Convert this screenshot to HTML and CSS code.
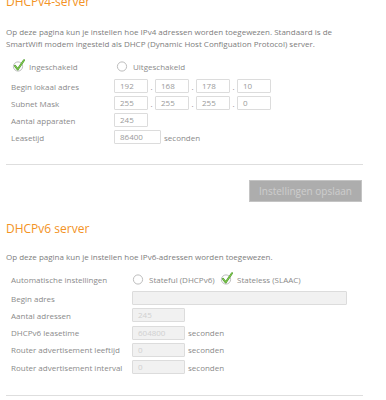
FILE: index.html
```html
<html>
<head>
<meta charset="utf-8">
<link rel="stylesheet" href="styles.css">
</head>
<body>

<div class="page">

  <h2 class="title first">DHCPv4-server</h2>
  <p class="intro">Op deze pagina kun je instellen hoe IPv4 adressen worden toegewezen. Standaard is de SmartWifi modem ingesteld als DHCP (Dynamic Host Configuation Protocol) server.</p>

  <div class="choice v4">
    <span class="opt w104">
      <svg class="mark" width="14" height="14" viewBox="0 0 14 14">
        <circle cx="6" cy="7.5" r="4.6" fill="#fff" stroke="#bdbdbd" stroke-width="1"/>
        <polyline points="3,6.8 5.7,10.4 12,1.2" fill="none" stroke="#4a9a2c" stroke-width="2" stroke-linecap="round" stroke-linejoin="round"/>
        <polyline points="3,6.8 5.7,10.4 12,1.2" fill="none" stroke="#9ad95a" stroke-width="0.8" stroke-linecap="round" stroke-linejoin="round"/>
      </svg>Ingeschakeld
    </span>
    <span class="opt">
      <svg class="mark" width="14" height="14" viewBox="0 0 14 14">
        <circle cx="6" cy="7.5" r="4.6" fill="#fff" stroke="#bdbdbd" stroke-width="1"/>
      </svg>Uitgeschakeld
    </span>
  </div>

  <div class="fields v4">
    <div class="row">
      <span class="label">Begin lokaal adres</span>
      <span class="field ip">192</span><span class="dot">.</span>
      <span class="field ip">168</span><span class="dot">.</span>
      <span class="field ip">178</span><span class="dot">.</span>
      <span class="field ip">10</span>
    </div>
    <div class="row">
      <span class="label">Subnet Mask</span>
      <span class="field ip">255</span><span class="dot">.</span>
      <span class="field ip">255</span><span class="dot">.</span>
      <span class="field ip">255</span><span class="dot">.</span>
      <span class="field ip">0</span>
    </div>
    <div class="row">
      <span class="label">Aantal apparaten</span>
      <span class="field ip">245</span>
    </div>
    <div class="row">
      <span class="label">Leasetijd</span>
      <span class="field lease">86400</span><span class="unit">seconden</span>
    </div>
  </div>

  <hr class="line">

  <div class="actions">
    <button class="save">Instellingen opslaan</button>
  </div>

  <h2 class="title">DHCPv6 server</h2>
  <p class="intro">Op deze pagina kun je instellen hoe IPv6-adressen worden toegewezen.</p>

  <div class="fields v6">
    <div class="row auto">
      <span class="label">Automatische instellingen</span>
      <span class="opt w88">
        <svg class="mark" width="14" height="14" viewBox="0 0 14 14">
          <circle cx="6" cy="7.5" r="4.6" fill="#fff" stroke="#bdbdbd" stroke-width="1"/>
        </svg>Stateful (DHCPv6)
      </span>
      <span class="opt">
        <svg class="mark" width="14" height="14" viewBox="0 0 14 14">
          <circle cx="6" cy="7.5" r="4.6" fill="#fff" stroke="#bdbdbd" stroke-width="1"/>
          <polyline points="3,6.8 5.7,10.4 12,1.2" fill="none" stroke="#4a9a2c" stroke-width="2" stroke-linecap="round" stroke-linejoin="round"/>
          <polyline points="3,6.8 5.7,10.4 12,1.2" fill="none" stroke="#9ad95a" stroke-width="0.8" stroke-linecap="round" stroke-linejoin="round"/>
        </svg>Stateless (SLAAC)
      </span>
    </div>
    <div class="row">
      <span class="label">Begin adres</span>
      <span class="field off wide"></span>
    </div>
    <div class="row">
      <span class="label">Aantal adressen</span>
      <span class="field off">245</span>
    </div>
    <div class="row">
      <span class="label">DHCPv6 leasetime</span>
      <span class="field off">604800</span><span class="unit">seconden</span>
    </div>
    <div class="row">
      <span class="label">Router advertisement leeftijd</span>
      <span class="field off">0</span><span class="unit">seconden</span>
    </div>
    <div class="row">
      <span class="label">Router advertisement interval</span>
      <span class="field off">0</span><span class="unit">seconden</span>
    </div>
  </div>

  <hr class="line last">

</div>

</body>
</html>
```

FILE: styles.css
```css
html {
  overflow: hidden;
}

body {
  margin: 0;
  background: #fff;
  font-family: "Open Sans", "Noto Sans", sans-serif;
  font-size: 8px;
  color: #8a8a8a;
}

.page {
  width: 357px;
  padding: 0 6px;
}

.title {
  margin: 19px 0 0 0;
  font-size: 12px;
  line-height: 16px;
  font-weight: 400;
  color: #f39325;
}

.title.first {
  margin-top: -6px;
}

.intro {
  margin: 14px 0 0 0;
  line-height: 12px;
  color: #7d7d7d;
}

.title.first + .intro {
  margin-top: 16px;
}

.choice {
  display: flex;
  align-items: center;
  height: 14px;
  margin-top: 9px;
  padding-left: 6px;
}

.opt {
  display: flex;
  align-items: center;
  height: 14px;
}

.w104 {
  width: 104px;
}

.w88 {
  width: 88px;
}

.mark {
  overflow: visible;
  margin-right: 3px;
  flex: none;
}

.fields.v4 {
  margin-top: 6px;
}

.fields.v6 {
  margin-top: 9px;
}

.row {
  display: flex;
  align-items: center;
  height: 14px;
  margin-bottom: 3px;
  padding-left: 5px;
}

.fields.v6 .row {
  margin-bottom: 3.3px;
}

.fields.v6 .row.auto {
  margin-bottom: 5px;
}

.label {
  width: 103px;
  flex: none;
}

.v6 .label {
  width: 121px;
}

.field {
  box-sizing: border-box;
  height: 14px;
  line-height: 12px;
  border: 1px solid #dcdcdc;
  border-radius: 1px;
  padding-left: 5px;
  color: #9a9a9a;
  background: #fff;
}

.ip {
  width: 34px;
}

.lease {
  width: 47px;
}

.dot {
  width: 7px;
  text-align: center;
}

.unit {
  margin-left: 3px;
}

.field.off {
  width: 53px;
  background: #f1f1f1;
  color: #d0d0d0;
}

.field.off.wide {
  width: 215px;
}

.line {
  margin: 20px 0 0 0;
  border: 0;
  border-top: 1px solid #dedede;
}

.line.last {
  margin-top: 21px;
}

.actions {
  display: flex;
  justify-content: flex-end;
  padding-right: 1px;
  margin-top: 15px;
}

.save {
  width: 113px;
  height: 22px;
  border: 1px solid #c4c4c4;
  background: #adadad;
  color: #cdcdcd;
  font-family: "Open Sans", "Noto Sans", sans-serif;
  font-size: 10px;
  padding: 0;
}
```
